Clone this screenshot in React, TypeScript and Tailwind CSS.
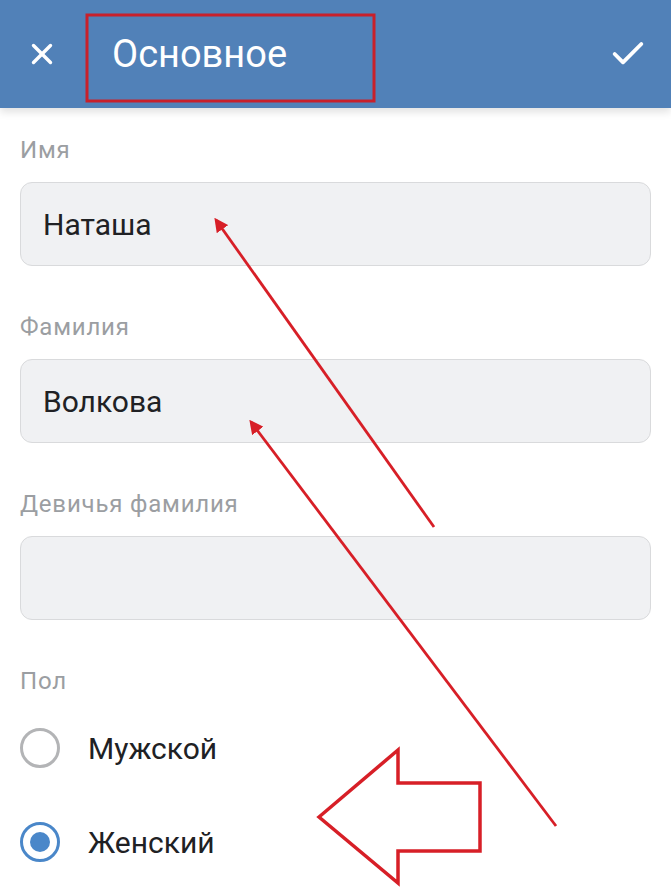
import { X, Check } from 'lucide-react';

interface FieldProps {
  label: string;
  value?: string;
}

function Field({ label, value }: FieldProps) {
  return (
    <div className="flex flex-col">
      <div className="h-[28px] text-[24px] leading-[28px] tracking-[0.8px] text-[#9b9ea2]">{label}</div>
      <div className="mt-[18px] h-[84px] rounded-[12px] border border-[#d9dadc] bg-[#f0f1f3] px-[22px] flex items-center text-[30px] text-[#202124]">
        {value}
      </div>
    </div>
  );
}

interface RadioProps {
  label: string;
  checked?: boolean;
}

function Radio({ label, checked }: RadioProps) {
  return (
    <div className="h-[60px] flex items-center">
      {checked ? (
        <div className="w-[40px] h-[40px] rounded-full border-[3px] border-[#4a87c9] flex items-center justify-center shrink-0">
          <div className="w-[20px] h-[20px] rounded-full bg-[#4a87c9]" />
        </div>
      ) : (
        <div className="w-[40px] h-[40px] rounded-full border-[3px] border-[#b3b4b6] shrink-0" />
      )}
      <span className="ml-[28px] text-[30px] text-[#202124]">{label}</span>
    </div>
  );
}

function Annotations() {
  return (
    <svg className="absolute inset-0 z-20 pointer-events-none" width="671" height="890" viewBox="0 0 671 890">
      <defs>
        <marker id="head" viewBox="0 0 10 10" refX="8" refY="5" markerWidth="5" markerHeight="5" orient="auto-start-reverse">
          <path d="M0 0 L10 5 L0 10 Z" fill="#d71f27" />
        </marker>
      </defs>
      <rect x="87" y="15" width="287" height="86" fill="none" stroke="#c8202b" strokeWidth="3" />
      <line x1="434" y1="527" x2="216" y2="220" stroke="#d71f27" strokeWidth="2.8" markerEnd="url(#head)" />
      <line x1="556" y1="826" x2="251" y2="422" stroke="#d71f27" strokeWidth="2.8" markerEnd="url(#head)" />
      <path
        d="M319 817 L398 750 L398 783 L480 783 L480 851 L398 851 L398 883 Z"
        fill="none"
        stroke="#d71f27"
        strokeWidth="3.5"
        strokeLinejoin="miter"
      />
    </svg>
  );
}

export default function App() {
  return (
    <div className="relative w-[671px] h-[890px] overflow-hidden bg-white font-['Roboto',sans-serif]">
      <header className="h-[108px] bg-[#5181b8] flex items-center text-white shadow-[0_4px_8px_rgba(0,0,0,0.12)] relative z-10">
        <div className="w-[84px] flex items-center justify-center">
          <X size={34} strokeWidth={2.4} />
        </div>
        <h1 className="ml-[28px] text-[38px] font-normal">Основное</h1>
        <div className="ml-auto w-[86px] flex items-center justify-center">
          <Check size={40} strokeWidth={2.3} />
        </div>
      </header>
      <main className="px-[20px] pt-[28px] flex flex-col gap-[47px]">
        <Field label="Имя" value="Наташа" />
        <Field label="Фамилия" value="Волкова" />
        <Field label="Девичья фамилия" />
        <div className="flex flex-col">
          <div className="h-[28px] text-[24px] leading-[28px] tracking-[0.8px] text-[#9b9ea2]">Пол</div>
          <div className="mt-[23px] flex flex-col gap-[34px]">
            <Radio label="Мужской" />
            <Radio label="Женский" checked />
          </div>
        </div>
      </main>
      <Annotations />
    </div>
  );
}
